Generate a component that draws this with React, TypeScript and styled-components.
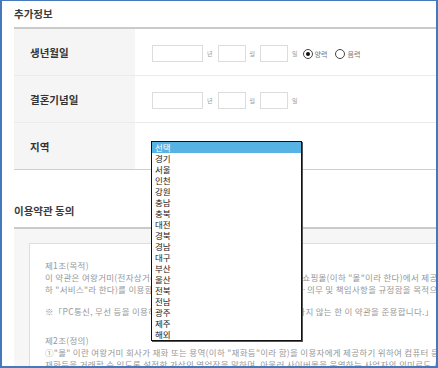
import React from "react";
import styled, { createGlobalStyle } from "styled-components";

const GlobalStyle = createGlobalStyle`
  html, body {
    margin: 0;
    padding: 0;
    background: #fff;
  }
  body {
    font-family: "Noto Sans CJK KR", "Noto Sans", sans-serif;
  }
`;

const regions = [
  "선택", "경기", "서울", "인천", "강원", "충남", "충북", "대전", "경북",
  "경남", "대구", "부산", "울산", "전북", "전남", "광주", "제주", "해외",
];

const Frame = styled.div`
  box-sizing: border-box;
  width: 438px;
  height: 368px;
  border: 2px solid #4678bc;
  border-top-width: 1px;
  overflow: hidden;
  background: #fff;
`;

const Content = styled.div`
  padding-left: 12px;
`;

const SectionTitle = styled.div<{ $top?: number; $bottom?: number }>`
  margin-top: ${(p) => p.$top ?? 0}px;
  padding: 5px 0 ${(p) => p.$bottom ?? 5}px;
  line-height: 16px;
  font-size: 10.5px;
  font-weight: bold;
  color: #3c3c3c;
  border-bottom: 2px solid #cacaca;
`;

const FormTable = styled.div`
  border-bottom: 1px solid #cfcfcf;
`;

const Row = styled.div<{ $last?: boolean }>`
  display: flex;
  height: 46px;
  border-bottom: ${(p) => (p.$last ? "none" : "1px solid #ebebeb")};
`;

const Label = styled.div`
  display: flex;
  align-items: center;
  box-sizing: border-box;
  width: 121px;
  padding-left: 16px;
  background: #f5f5f5;
  font-size: 10.5px;
  font-weight: bold;
  color: #333;
`;

const Field = styled.div`
  position: relative;
  flex: 1;
  display: flex;
  align-items: center;
  padding-left: 17px;
  padding-top: 3px;
`;

const DateInput = styled.input<{ $w: number }>`
  box-sizing: border-box;
  width: ${(p) => p.$w}px;
  height: 17px;
  margin: 0;
  padding: 0 2px;
  border: 1px solid #dcdcdc;
  background: #fff;
  outline: none;
`;

const Unit = styled.span`
  margin: 0 5px 0 4px;
  font-size: 6px;
  color: #9a9a9a;
`;

const RadioItem = styled.label`
  display: inline-flex;
  align-items: center;
  gap: 2px;
  margin-right: 8px;
  font-size: 7px;
  color: #777;
`;

const RadioMark = styled.span<{ $checked?: boolean }>`
  position: relative;
  box-sizing: border-box;
  width: 10px;
  height: 10px;
  border: 1px solid #444;
  border-radius: 50%;
  background: #fff;

  &::after {
    content: "";
    display: ${(p) => (p.$checked ? "block" : "none")};
    position: absolute;
    left: 2px;
    top: 2px;
    width: 4px;
    height: 4px;
    border-radius: 50%;
    background: #111;
  }
`;

const ListBox = styled.ul`
  position: absolute;
  z-index: 5;
  left: 16px;
  top: 18px;
  box-sizing: border-box;
  width: 151px;
  margin: 0;
  padding: 0;
  list-style: none;
  background: #fff;
  border: 1px solid #111;
  box-shadow: 1px 1px 0 #555;
`;

const ListItem = styled.li<{ $selected?: boolean }>`
  height: 11px;
  line-height: 11px;
  padding-left: 3px;
  font-size: 8.5px;
  color: ${(p) => (p.$selected ? "#fff" : "#222")};
  background: ${(p) => (p.$selected ? "#56b3e3" : "transparent")};
`;

const TermsPanel = styled.div`
  padding: 14px 0 0 15px;
  background: #f6f6f6;
  height: 200px;
`;

const TermsBox = styled.div`
  height: 100%;
  padding: 15px 0 0 15px;
  background: #fff;
  border: 1px solid #dedede;
  border-right: none;
  font-size: 8.5px;
  letter-spacing: 0.3px;
  line-height: 12px;
  color: #979797;
  white-space: nowrap;
`;

const Paragraph = styled.div<{ $after?: number }>`
  margin-bottom: ${(p) => p.$after ?? 10}px;
`;

const Line = styled.div``;

function DateField({ lunar }: { lunar?: boolean }) {
  return (
    <Field>
      <DateInput $w={51} />
      <Unit>년</Unit>
      <DateInput $w={28} />
      <Unit>월</Unit>
      <DateInput $w={28} />
      <Unit>일</Unit>
      {lunar && (
        <>
          <RadioItem>
            <RadioMark $checked />
            양력
          </RadioItem>
          <RadioItem>
            <RadioMark />
            음력
          </RadioItem>
        </>
      )}
    </Field>
  );
}

export default function App() {
  return (
    <Frame>
      <GlobalStyle />
      <Content>
        <SectionTitle>추가정보</SectionTitle>
        <FormTable>
          <Row>
            <Label>생년월일</Label>
            <DateField lunar />
          </Row>
          <Row>
            <Label>결혼기념일</Label>
            <DateField />
          </Row>
          <Row $last>
            <Label>지역</Label>
            <Field>
              <ListBox>
                {regions.map((r, i) => (
                  <ListItem key={r} $selected={i === 0}>
                    {r}
                  </ListItem>
                ))}
              </ListBox>
            </Field>
          </Row>
        </FormTable>

        <SectionTitle $top={28} $bottom={8}>
          이용약관 동의
        </SectionTitle>
        <TermsPanel>
          <TermsBox>
            <Paragraph>
              <Line>제1조(목적)</Line>
              <Line>
                이 약관은 여왕거미(전자상거래 사업자)가 운영하는 여왕거미의 인터넷 쇼핑몰(이하 "몰"이라 한다)에서 제공하는 인터넷 관련 서비스(이
              </Line>
              <Line>
                하 "서비스"라 한다)를 이용함에 있어 여왕거미 쇼핑몰과 이용자의 권리·의무 및 책임사항을 규정함을 목적으로 합니다.
              </Line>
            </Paragraph>
            <Paragraph $after={17}>
              <Line>※「PC통신, 무선 등을 이용하는 전자상거래에 대해서도 그 성질에 반하지 않는 한 이 약관을 준용합니다.」</Line>
            </Paragraph>
            <Paragraph>
              <Line>제2조(정의)</Line>
              <Line>
                ①"몰" 이란 여왕거미 회사가 재화 또는 용역(이하 "재화등"이라 함)을 이용자에게 제공하기 위하여 컴퓨터 등 정보통신설비를 이용하여
              </Line>
              <Line>
                재화등을 거래할 수 있도록 설정한 가상의 영업장을 말하며, 아울러 사이버몰을 운영하는 사업자의 의미로도 사용합니다.
              </Line>
            </Paragraph>
          </TermsBox>
        </TermsPanel>
      </Content>
    </Frame>
  );
}
